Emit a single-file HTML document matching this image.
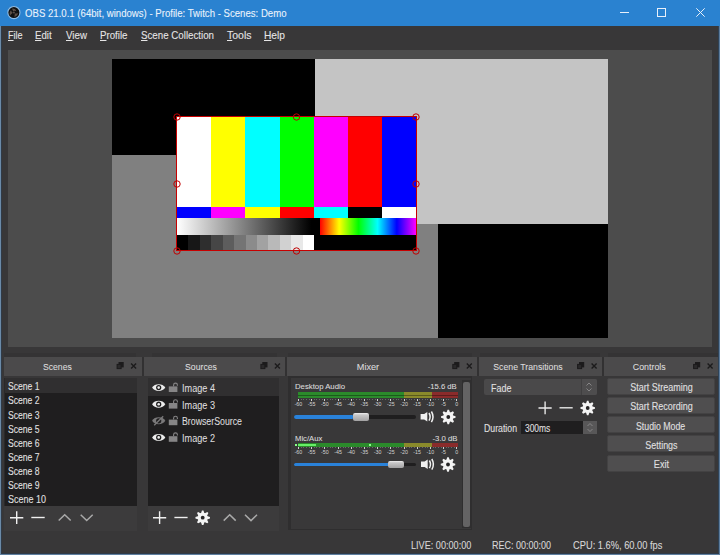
<!DOCTYPE html>
<html><head><meta charset="utf-8">
<style>
*{box-sizing:border-box;margin:0;padding:0}
html,body{width:720px;height:555px;overflow:hidden;background:#383738;font-family:"Liberation Sans",sans-serif;color:#e1e0e1}
.a{position:absolute}
.t{position:absolute;white-space:nowrap;line-height:1;-webkit-text-stroke:0.08px currentColor}
svg{position:absolute;overflow:visible}
.dtitle{position:absolute;top:357px;height:18.5px;background:#4b4a4b}
.list{position:absolute;background:#1f1e1f}
.btn{position:absolute;left:607px;width:108px;height:17.2px;background:#4f4e4f;border:1px solid #434243;border-radius:2px}
.lbl{position:absolute;font-size:5.3px;color:#d4d4d4;line-height:1;white-space:nowrap;transform:translateX(-50%)}
</style></head><body>
<svg style="left:0;top:0" width="0" height="0"><defs>
 <g id="gear"><path d="M-1.76 -4.25 L-0.76 -7.26 L0.76 -7.26 L1.76 -4.25 L4.59 -5.67 L5.67 -4.59 L4.25 -1.76 L7.26 -0.76 L7.26 0.76 L4.25 1.76 L5.67 4.59 L4.59 5.67 L1.76 4.25 L0.76 7.26 L-0.76 7.26 L-1.76 4.25 L-4.59 5.67 L-5.67 4.59 L-4.25 1.76 L-7.26 0.76 L-7.26 -0.76 L-4.25 -1.76 L-5.67 -4.59 L-4.59 -5.67Z" fill="#f4f4f4"/><circle r="4.9" fill="#f4f4f4"/><circle r="1.9" fill="#262526"/></g>
 <g id="spk"><path d="M0 -2.8H3.6L6.7 -4.9V4.8L3.6 2.7H0Z" fill="#f0f0f0"/><path d="M8.4 -3.8Q10.6 0 8.4 3.8M10.8 -5.3Q14 0 10.8 5.3" fill="none" stroke="#f0f0f0" stroke-width="1.5"/></g>
 <g id="fc"><rect x="2" y="0" width="5.2" height="5.4" fill="#1c1b1c"/><rect x="0.6" y="2.4" width="4" height="4.2" fill="#2a292a" stroke="#1c1b1c" stroke-width="1"/><path d="M14.6 1.6L19.6 6.6M19.6 1.6L14.6 6.6" stroke="#1c1b1c" stroke-width="1.4"/></g>
 <g id="eye"><path d="M-6.6 0C-4.2 -4.6 4.2 -4.6 6.6 0C4.2 4.6 -4.2 4.6 -6.6 0Z" fill="#ececec"/><circle r="2.6" fill="#1f1e1f"/><circle r="1.3" fill="#ececec"/></g>
 <g id="lock"><rect x="-4.2" y="-1.6" width="8.6" height="5.6" fill="#868586"/><path d="M0.6 -1.6V-3A1.9 1.9 0 0 1 4.4 -3V-2.2" fill="none" stroke="#868586" stroke-width="1.1"/></g>
 <g id="spin"><path d="M1.5 4.5L4 2L6.5 4.5M1.5 7.5L4 10L6.5 7.5" fill="none" stroke="#8c8b8c" stroke-width="0.9"/></g>
</defs></svg>

<!-- title bar -->
<div class="a" style="left:0;top:0;width:720px;height:26px;background:#2a82d0"></div>
<svg style="left:7px;top:6px" width="14" height="14" viewBox="0 0 14 14">
 <circle cx="6.9" cy="6.55" r="6.1" fill="#111" stroke="#8fbde6" stroke-width="1.1"/>
 <path d="M5.2 2.6Q8.6 2.2 9.4 5.2Q7.6 4.2 6.2 5.2Q5.2 4 5.2 2.6Z" fill="#5c4f47"/>
 <path d="M11 7.2Q10.2 10.4 7.2 10.8Q8.2 9.2 7.6 7.6Q9.2 7.6 11 7.2Z" fill="#5c4f47"/>
 <path d="M3 9.6Q1.8 6.4 4 4.2Q4.4 6 5.8 6.8Q4.4 7.8 3 9.6Z" fill="#5c4f47"/>
 <circle cx="6.9" cy="6.6" r="1" fill="#5a504a"/>
</svg>
<div class="a" style="left:620px;top:12px;width:9px;height:1px;background:#e8f0fa"></div>
<div class="a" style="left:657px;top:8px;width:9px;height:9px;border:1px solid #e8f0fa"></div>
<svg style="left:695.5px;top:8px" width="9" height="9" viewBox="0 0 9 9"><path d="M0.3 0.3L8.7 8.7M8.7 0.3L0.3 8.7" stroke="#e8f0fa" stroke-width="1"/></svg>

<!-- preview -->
<div class="a" style="left:8px;top:50px;width:704px;height:296.8px;background:#4c4c4c"></div>
<div class="a" style="left:112px;top:58.5px;width:496px;height:279.5px;background:#808080"></div>
<div class="a" style="left:112px;top:58.5px;width:203px;height:96.5px;background:#000"></div>
<div class="a" style="left:315px;top:58.5px;width:293px;height:165px;background:#c4c4c4"></div>
<div class="a" style="left:438px;top:223.5px;width:170px;height:114.5px;background:#000"></div>
<!-- color bars -->
<div class="a" style="left:177.2px;top:116.9px;width:239px;height:133.6px;background:#000;overflow:hidden">
 <div class="a" style="left:0;top:0;width:239px;height:90.5px;display:flex">
  <div style="flex:1;background:#fff"></div><div style="flex:1;background:#ff0"></div><div style="flex:1;background:#0ff"></div><div style="flex:1;background:#0f0"></div><div style="flex:1;background:#f0f"></div><div style="flex:1;background:#f00"></div><div style="flex:1;background:#00f"></div>
 </div>
 <div class="a" style="left:0;top:90.5px;width:239px;height:11px;display:flex">
  <div style="flex:1;background:#00f"></div><div style="flex:1;background:#f0f"></div><div style="flex:1;background:#ff0"></div><div style="flex:1;background:#f00"></div><div style="flex:1;background:#0ff"></div><div style="flex:1;background:#000"></div><div style="flex:1;background:#fff"></div>
 </div>
 <div class="a" style="left:0;top:101.5px;width:143px;height:17px;background:linear-gradient(90deg,#fff,#000 94%)"></div>
 <div class="a" style="left:143px;top:101.5px;width:96px;height:17px;background:linear-gradient(90deg,#f00,#ff0 20%,#0f0 40%,#0ff 60%,#00f 80%,#f0f)"></div>
 <div class="a" style="left:0;top:118.5px;width:137px;height:15.5px;background:linear-gradient(90deg,#000 0 8.33%,#171717 0 16.66%,#2e2e2e 0 25%,#464646 0 33.33%,#5d5d5d 0 41.66%,#747474 0 50%,#8b8b8b 0 58.33%,#a2a2a2 0 66.66%,#b9b9b9 0 75%,#d1d1d1 0 83.33%,#e8e8e8 0 91.66%,#fff 0)"></div>
</div>
<!-- selection box -->
<div class="a" style="left:176.4px;top:116px;width:240.4px;height:135.2px;border:1px solid #c80000"></div>
<svg style="left:170px;top:109.5px" width="254" height="149" viewBox="0 0 254 149">
 <g fill="none" stroke="#c00000" stroke-width="1">
  <circle cx="7" cy="7" r="3.2"/><circle cx="126.5" cy="7" r="3.2"/><circle cx="246" cy="7" r="3.2"/>
  <circle cx="7" cy="74" r="3.2"/><circle cx="246" cy="74" r="3.2"/>
  <circle cx="7" cy="141" r="3.2"/><circle cx="126.5" cy="141" r="3.2"/><circle cx="246" cy="141" r="3.2"/>
 </g>
</svg>

<!-- dock top dark band segments -->
<div class="a" style="left:4px;top:353px;width:132px;height:4px;background:#343334"></div>
<div class="a" style="left:152px;top:353px;width:125px;height:4px;background:#343334"></div>
<div class="a" style="left:288px;top:353px;width:184px;height:4px;background:#343334"></div>
<div class="a" style="left:480px;top:353px;width:120px;height:4px;background:#343334"></div>
<div class="a" style="left:608px;top:353px;width:110px;height:4px;background:#343334"></div>

<!-- dock titles -->
<div class="a" style="left:4px;top:357px;width:714px;height:18.5px;background:#323132"></div>
<div class="dtitle" style="left:4px;width:137.5px"></div>
<div class="dtitle" style="left:143.5px;width:141.8px"></div>
<div class="dtitle" style="left:287px;width:190.2px"></div>
<div class="dtitle" style="left:479.4px;width:122.6px"></div>
<div class="dtitle" style="left:604.4px;width:113.6px"></div>
<svg style="left:0;top:0" width="720" height="555">
 <use href="#fc" x="116.5" y="362"/>
 <use href="#fc" x="260.3" y="362"/>
 <use href="#fc" x="452.2" y="362"/>
 <use href="#fc" x="577" y="362"/>
 <use href="#fc" x="693" y="362"/>
</svg>

<!-- Scenes dock -->
<div class="list" style="left:4px;top:378px;width:133px;height:128px"></div>
<div class="a" style="left:4px;top:378px;width:133px;height:14.8px;background:#302f30"></div>
<div class="a" style="left:4px;top:506px;width:133px;height:24.5px;background:#3c3b3c"></div>
<div class="a" style="left:4px;top:378px;width:1px;height:128px;background:#2a292a"></div>
<svg style="left:4px;top:506px" width="133" height="24" viewBox="0 0 133 24">
 <path d="M6 11.7H19.3M12.7 5.2V18" stroke="#efefef" stroke-width="1.4"/>
 <path d="M27.3 11.5H40.7" stroke="#efefef" stroke-width="1.4"/>
 <path d="M54.7 14.5L60.7 8.7L66.7 14.5" fill="none" stroke="#a9a9a9" stroke-width="1.5"/>
 <path d="M76.7 8.7L82.7 14.5L88.7 8.7" fill="none" stroke="#a9a9a9" stroke-width="1.5"/>
</svg>

<!-- Sources dock -->
<div class="list" style="left:148px;top:378px;width:131px;height:128px"></div>
<div class="a" style="left:148px;top:378px;width:131px;height:17.5px;background:#302f30"></div>
<svg style="left:148px;top:378px" width="40" height="70" viewBox="0 0 40 70">
 <use href="#eye" x="10.7" y="9.6"/>
 <use href="#eye" x="10.7" y="26.2"/>
 <g transform="translate(10.7 42.8)"><path d="M-6.6 0C-4.2 -4.6 4.2 -4.6 6.6 0C4.2 4.6 -4.2 4.6 -6.6 0Z" fill="#7a797a"/><circle r="2.6" fill="#1f1e1f"/><path d="M-4.5 4.5L4.5 -4.5" stroke="#7a797a" stroke-width="1.3"/></g>
 <use href="#eye" x="10.7" y="59.4"/>
 <use href="#lock" x="25" y="10"/>
 <use href="#lock" x="25" y="26.6"/>
 <use href="#lock" x="25" y="43.2"/>
 <use href="#lock" x="25" y="59.8"/>
</svg>
<div class="a" style="left:148px;top:506px;width:131px;height:24.5px;background:#3c3b3c"></div>
<svg style="left:148px;top:506px" width="131" height="24" viewBox="0 0 131 24">
 <path d="M5 11.7H18.2M11.6 5.2V18" stroke="#efefef" stroke-width="1.4"/>
 <path d="M26.4 11.5H39.6" stroke="#efefef" stroke-width="1.4"/>
 <use href="#gear" x="54.7" y="11.7"/>
 <path d="M75.7 14.6L81.7 8.8L87.7 14.6" fill="none" stroke="#a9a9a9" stroke-width="1.5"/>
 <path d="M97 8.8L103 14.6L109 8.8" fill="none" stroke="#a9a9a9" stroke-width="1.5"/>
</svg>

<!-- Mixer dock -->
<div class="a" style="left:288px;top:375.5px;width:184px;height:154px;background:#2f2e2f"></div>
<div class="a" style="left:291px;top:378px;width:180px;height:151px;background:#393839"></div>
<div class="a" style="left:462px;top:380px;width:9px;height:148px;background:#2f2e2f"></div>
<div class="a" style="left:463px;top:381.6px;width:6.6px;height:145px;background:#646364;border-radius:2px"></div>
<div class="a" style="left:298px;top:392.3px;width:105.6px;height:5.5px;background:#2b8a2b"></div>
<div class="a" style="left:403.6px;top:392.3px;width:28.6px;height:5.5px;background:#8a8a2b"></div>
<div class="a" style="left:432.2px;top:392.3px;width:25.6px;height:5.5px;background:#8a2b2b"></div>
<div class="a" style="left:298px;top:395px;width:160px;height:0.6px;background:rgba(0,0,0,0.35)"></div>
<div class="a" style="left:298px;top:443.1px;width:105.6px;height:3.8px;background:#2b8a2b"></div>
<div class="a" style="left:403.6px;top:443.1px;width:28.6px;height:3.8px;background:#8a8a2b"></div>
<div class="a" style="left:432.2px;top:443.1px;width:25.6px;height:3.8px;background:#8a2b2b"></div>
<div class="a" style="left:298px;top:443.5px;width:17.5px;height:2px;background:#66ee66"></div>
<div class="a" style="left:294.8px;top:443.5px;width:2px;height:2px;background:#88ff88"></div>
<div class="a" style="left:368.8px;top:443.5px;width:2px;height:2px;background:#88ff88"></div>
<div class="a" style="left:297.9px;top:398.6px;width:1px;height:2px;background:#d0cfd0"></div>
<div class="lbl" style="left:298.4px;top:401.6px">-60</div>
<div class="a" style="left:300.5px;top:398.6px;width:1px;height:1px;background:#6a696a"></div>
<div class="a" style="left:303.2px;top:398.6px;width:1px;height:1px;background:#6a696a"></div>
<div class="a" style="left:305.8px;top:398.6px;width:1px;height:1px;background:#6a696a"></div>
<div class="a" style="left:308.5px;top:398.6px;width:1px;height:1px;background:#6a696a"></div>
<div class="a" style="left:311.1px;top:398.6px;width:1px;height:2px;background:#d0cfd0"></div>
<div class="lbl" style="left:311.6px;top:401.6px">-55</div>
<div class="a" style="left:313.7px;top:398.6px;width:1px;height:1px;background:#6a696a"></div>
<div class="a" style="left:316.4px;top:398.6px;width:1px;height:1px;background:#6a696a"></div>
<div class="a" style="left:319.0px;top:398.6px;width:1px;height:1px;background:#6a696a"></div>
<div class="a" style="left:321.7px;top:398.6px;width:1px;height:1px;background:#6a696a"></div>
<div class="a" style="left:324.3px;top:398.6px;width:1px;height:2px;background:#d0cfd0"></div>
<div class="lbl" style="left:324.8px;top:401.6px">-50</div>
<div class="a" style="left:326.9px;top:398.6px;width:1px;height:1px;background:#6a696a"></div>
<div class="a" style="left:329.6px;top:398.6px;width:1px;height:1px;background:#6a696a"></div>
<div class="a" style="left:332.2px;top:398.6px;width:1px;height:1px;background:#6a696a"></div>
<div class="a" style="left:334.9px;top:398.6px;width:1px;height:1px;background:#6a696a"></div>
<div class="a" style="left:337.5px;top:398.6px;width:1px;height:2px;background:#d0cfd0"></div>
<div class="lbl" style="left:338.0px;top:401.6px">-45</div>
<div class="a" style="left:340.1px;top:398.6px;width:1px;height:1px;background:#6a696a"></div>
<div class="a" style="left:342.8px;top:398.6px;width:1px;height:1px;background:#6a696a"></div>
<div class="a" style="left:345.4px;top:398.6px;width:1px;height:1px;background:#6a696a"></div>
<div class="a" style="left:348.1px;top:398.6px;width:1px;height:1px;background:#6a696a"></div>
<div class="a" style="left:350.7px;top:398.6px;width:1px;height:2px;background:#d0cfd0"></div>
<div class="lbl" style="left:351.2px;top:401.6px">-40</div>
<div class="a" style="left:353.3px;top:398.6px;width:1px;height:1px;background:#6a696a"></div>
<div class="a" style="left:356.0px;top:398.6px;width:1px;height:1px;background:#6a696a"></div>
<div class="a" style="left:358.6px;top:398.6px;width:1px;height:1px;background:#6a696a"></div>
<div class="a" style="left:361.3px;top:398.6px;width:1px;height:1px;background:#6a696a"></div>
<div class="a" style="left:363.9px;top:398.6px;width:1px;height:2px;background:#d0cfd0"></div>
<div class="lbl" style="left:364.4px;top:401.6px">-35</div>
<div class="a" style="left:366.5px;top:398.6px;width:1px;height:1px;background:#6a696a"></div>
<div class="a" style="left:369.2px;top:398.6px;width:1px;height:1px;background:#6a696a"></div>
<div class="a" style="left:371.8px;top:398.6px;width:1px;height:1px;background:#6a696a"></div>
<div class="a" style="left:374.5px;top:398.6px;width:1px;height:1px;background:#6a696a"></div>
<div class="a" style="left:377.1px;top:398.6px;width:1px;height:2px;background:#d0cfd0"></div>
<div class="lbl" style="left:377.6px;top:401.6px">-30</div>
<div class="a" style="left:379.7px;top:398.6px;width:1px;height:1px;background:#6a696a"></div>
<div class="a" style="left:382.4px;top:398.6px;width:1px;height:1px;background:#6a696a"></div>
<div class="a" style="left:385.0px;top:398.6px;width:1px;height:1px;background:#6a696a"></div>
<div class="a" style="left:387.7px;top:398.6px;width:1px;height:1px;background:#6a696a"></div>
<div class="a" style="left:390.3px;top:398.6px;width:1px;height:2px;background:#d0cfd0"></div>
<div class="lbl" style="left:390.8px;top:401.6px">-25</div>
<div class="a" style="left:392.9px;top:398.6px;width:1px;height:1px;background:#6a696a"></div>
<div class="a" style="left:395.6px;top:398.6px;width:1px;height:1px;background:#6a696a"></div>
<div class="a" style="left:398.2px;top:398.6px;width:1px;height:1px;background:#6a696a"></div>
<div class="a" style="left:400.9px;top:398.6px;width:1px;height:1px;background:#6a696a"></div>
<div class="a" style="left:403.5px;top:398.6px;width:1px;height:2px;background:#d0cfd0"></div>
<div class="lbl" style="left:404.0px;top:401.6px">-20</div>
<div class="a" style="left:406.1px;top:398.6px;width:1px;height:1px;background:#6a696a"></div>
<div class="a" style="left:408.8px;top:398.6px;width:1px;height:1px;background:#6a696a"></div>
<div class="a" style="left:411.4px;top:398.6px;width:1px;height:1px;background:#6a696a"></div>
<div class="a" style="left:414.1px;top:398.6px;width:1px;height:1px;background:#6a696a"></div>
<div class="a" style="left:416.7px;top:398.6px;width:1px;height:2px;background:#d0cfd0"></div>
<div class="lbl" style="left:417.2px;top:401.6px">-15</div>
<div class="a" style="left:419.3px;top:398.6px;width:1px;height:1px;background:#6a696a"></div>
<div class="a" style="left:422.0px;top:398.6px;width:1px;height:1px;background:#6a696a"></div>
<div class="a" style="left:424.6px;top:398.6px;width:1px;height:1px;background:#6a696a"></div>
<div class="a" style="left:427.3px;top:398.6px;width:1px;height:1px;background:#6a696a"></div>
<div class="a" style="left:429.9px;top:398.6px;width:1px;height:2px;background:#d0cfd0"></div>
<div class="lbl" style="left:430.4px;top:401.6px">-10</div>
<div class="a" style="left:432.5px;top:398.6px;width:1px;height:1px;background:#6a696a"></div>
<div class="a" style="left:435.2px;top:398.6px;width:1px;height:1px;background:#6a696a"></div>
<div class="a" style="left:437.8px;top:398.6px;width:1px;height:1px;background:#6a696a"></div>
<div class="a" style="left:440.5px;top:398.6px;width:1px;height:1px;background:#6a696a"></div>
<div class="a" style="left:443.1px;top:398.6px;width:1px;height:2px;background:#d0cfd0"></div>
<div class="lbl" style="left:443.6px;top:401.6px">-5</div>
<div class="a" style="left:445.7px;top:398.6px;width:1px;height:1px;background:#6a696a"></div>
<div class="a" style="left:448.4px;top:398.6px;width:1px;height:1px;background:#6a696a"></div>
<div class="a" style="left:451.0px;top:398.6px;width:1px;height:1px;background:#6a696a"></div>
<div class="a" style="left:453.7px;top:398.6px;width:1px;height:1px;background:#6a696a"></div>
<div class="a" style="left:456.3px;top:398.6px;width:1px;height:2px;background:#d0cfd0"></div>
<div class="lbl" style="left:456.8px;top:401.6px">0</div>
<div class="a" style="left:297.9px;top:446.8px;width:1px;height:2px;background:#d0cfd0"></div>
<div class="lbl" style="left:298.4px;top:449.6px">-60</div>
<div class="a" style="left:300.5px;top:446.8px;width:1px;height:1px;background:#6a696a"></div>
<div class="a" style="left:303.2px;top:446.8px;width:1px;height:1px;background:#6a696a"></div>
<div class="a" style="left:305.8px;top:446.8px;width:1px;height:1px;background:#6a696a"></div>
<div class="a" style="left:308.5px;top:446.8px;width:1px;height:1px;background:#6a696a"></div>
<div class="a" style="left:311.1px;top:446.8px;width:1px;height:2px;background:#d0cfd0"></div>
<div class="lbl" style="left:311.6px;top:449.6px">-55</div>
<div class="a" style="left:313.7px;top:446.8px;width:1px;height:1px;background:#6a696a"></div>
<div class="a" style="left:316.4px;top:446.8px;width:1px;height:1px;background:#6a696a"></div>
<div class="a" style="left:319.0px;top:446.8px;width:1px;height:1px;background:#6a696a"></div>
<div class="a" style="left:321.7px;top:446.8px;width:1px;height:1px;background:#6a696a"></div>
<div class="a" style="left:324.3px;top:446.8px;width:1px;height:2px;background:#d0cfd0"></div>
<div class="lbl" style="left:324.8px;top:449.6px">-50</div>
<div class="a" style="left:326.9px;top:446.8px;width:1px;height:1px;background:#6a696a"></div>
<div class="a" style="left:329.6px;top:446.8px;width:1px;height:1px;background:#6a696a"></div>
<div class="a" style="left:332.2px;top:446.8px;width:1px;height:1px;background:#6a696a"></div>
<div class="a" style="left:334.9px;top:446.8px;width:1px;height:1px;background:#6a696a"></div>
<div class="a" style="left:337.5px;top:446.8px;width:1px;height:2px;background:#d0cfd0"></div>
<div class="lbl" style="left:338.0px;top:449.6px">-45</div>
<div class="a" style="left:340.1px;top:446.8px;width:1px;height:1px;background:#6a696a"></div>
<div class="a" style="left:342.8px;top:446.8px;width:1px;height:1px;background:#6a696a"></div>
<div class="a" style="left:345.4px;top:446.8px;width:1px;height:1px;background:#6a696a"></div>
<div class="a" style="left:348.1px;top:446.8px;width:1px;height:1px;background:#6a696a"></div>
<div class="a" style="left:350.7px;top:446.8px;width:1px;height:2px;background:#d0cfd0"></div>
<div class="lbl" style="left:351.2px;top:449.6px">-40</div>
<div class="a" style="left:353.3px;top:446.8px;width:1px;height:1px;background:#6a696a"></div>
<div class="a" style="left:356.0px;top:446.8px;width:1px;height:1px;background:#6a696a"></div>
<div class="a" style="left:358.6px;top:446.8px;width:1px;height:1px;background:#6a696a"></div>
<div class="a" style="left:361.3px;top:446.8px;width:1px;height:1px;background:#6a696a"></div>
<div class="a" style="left:363.9px;top:446.8px;width:1px;height:2px;background:#d0cfd0"></div>
<div class="lbl" style="left:364.4px;top:449.6px">-35</div>
<div class="a" style="left:366.5px;top:446.8px;width:1px;height:1px;background:#6a696a"></div>
<div class="a" style="left:369.2px;top:446.8px;width:1px;height:1px;background:#6a696a"></div>
<div class="a" style="left:371.8px;top:446.8px;width:1px;height:1px;background:#6a696a"></div>
<div class="a" style="left:374.5px;top:446.8px;width:1px;height:1px;background:#6a696a"></div>
<div class="a" style="left:377.1px;top:446.8px;width:1px;height:2px;background:#d0cfd0"></div>
<div class="lbl" style="left:377.6px;top:449.6px">-30</div>
<div class="a" style="left:379.7px;top:446.8px;width:1px;height:1px;background:#6a696a"></div>
<div class="a" style="left:382.4px;top:446.8px;width:1px;height:1px;background:#6a696a"></div>
<div class="a" style="left:385.0px;top:446.8px;width:1px;height:1px;background:#6a696a"></div>
<div class="a" style="left:387.7px;top:446.8px;width:1px;height:1px;background:#6a696a"></div>
<div class="a" style="left:390.3px;top:446.8px;width:1px;height:2px;background:#d0cfd0"></div>
<div class="lbl" style="left:390.8px;top:449.6px">-25</div>
<div class="a" style="left:392.9px;top:446.8px;width:1px;height:1px;background:#6a696a"></div>
<div class="a" style="left:395.6px;top:446.8px;width:1px;height:1px;background:#6a696a"></div>
<div class="a" style="left:398.2px;top:446.8px;width:1px;height:1px;background:#6a696a"></div>
<div class="a" style="left:400.9px;top:446.8px;width:1px;height:1px;background:#6a696a"></div>
<div class="a" style="left:403.5px;top:446.8px;width:1px;height:2px;background:#d0cfd0"></div>
<div class="lbl" style="left:404.0px;top:449.6px">-20</div>
<div class="a" style="left:406.1px;top:446.8px;width:1px;height:1px;background:#6a696a"></div>
<div class="a" style="left:408.8px;top:446.8px;width:1px;height:1px;background:#6a696a"></div>
<div class="a" style="left:411.4px;top:446.8px;width:1px;height:1px;background:#6a696a"></div>
<div class="a" style="left:414.1px;top:446.8px;width:1px;height:1px;background:#6a696a"></div>
<div class="a" style="left:416.7px;top:446.8px;width:1px;height:2px;background:#d0cfd0"></div>
<div class="lbl" style="left:417.2px;top:449.6px">-15</div>
<div class="a" style="left:419.3px;top:446.8px;width:1px;height:1px;background:#6a696a"></div>
<div class="a" style="left:422.0px;top:446.8px;width:1px;height:1px;background:#6a696a"></div>
<div class="a" style="left:424.6px;top:446.8px;width:1px;height:1px;background:#6a696a"></div>
<div class="a" style="left:427.3px;top:446.8px;width:1px;height:1px;background:#6a696a"></div>
<div class="a" style="left:429.9px;top:446.8px;width:1px;height:2px;background:#d0cfd0"></div>
<div class="lbl" style="left:430.4px;top:449.6px">-10</div>
<div class="a" style="left:432.5px;top:446.8px;width:1px;height:1px;background:#6a696a"></div>
<div class="a" style="left:435.2px;top:446.8px;width:1px;height:1px;background:#6a696a"></div>
<div class="a" style="left:437.8px;top:446.8px;width:1px;height:1px;background:#6a696a"></div>
<div class="a" style="left:440.5px;top:446.8px;width:1px;height:1px;background:#6a696a"></div>
<div class="a" style="left:443.1px;top:446.8px;width:1px;height:2px;background:#d0cfd0"></div>
<div class="lbl" style="left:443.6px;top:449.6px">-5</div>
<div class="a" style="left:445.7px;top:446.8px;width:1px;height:1px;background:#6a696a"></div>
<div class="a" style="left:448.4px;top:446.8px;width:1px;height:1px;background:#6a696a"></div>
<div class="a" style="left:451.0px;top:446.8px;width:1px;height:1px;background:#6a696a"></div>
<div class="a" style="left:453.7px;top:446.8px;width:1px;height:1px;background:#6a696a"></div>
<div class="a" style="left:456.3px;top:446.8px;width:1px;height:2px;background:#d0cfd0"></div>
<div class="lbl" style="left:456.8px;top:449.6px">0</div>
<div class="a" style="left:294px;top:415px;width:122px;height:3.5px;background:#1f1e1f;border-radius:2px"></div>
<div class="a" style="left:294px;top:415px;width:60px;height:3.5px;background:#2a82da;border-radius:2px"></div>
<div class="a" style="left:352.6px;top:413px;width:16px;height:7.5px;border-radius:2px;background:linear-gradient(#f0eff0,#c8c7c8 25%,#a2a1a2)"></div>
<div class="a" style="left:294px;top:462.8px;width:122px;height:3.5px;background:#1f1e1f;border-radius:2px"></div>
<div class="a" style="left:294px;top:462.8px;width:96px;height:3.5px;background:#2a82da;border-radius:2px"></div>
<div class="a" style="left:388.3px;top:460.8px;width:16px;height:7.5px;border-radius:2px;background:linear-gradient(#f0eff0,#c8c7c8 25%,#a2a1a2)"></div>
<svg style="left:0;top:0" width="720" height="555">
 <use href="#spk" x="420.6" y="416.8"/>
 <use href="#gear" x="448.3" y="417"/>
 <use href="#spk" x="421" y="464.3"/>
 <use href="#gear" x="448" y="464.5"/>
</svg>

<!-- Scene transitions dock -->
<div class="a" style="left:484px;top:378.8px;width:112.5px;height:16.5px;background:#4a494a;border-radius:2px"></div>
<div class="a" style="left:581px;top:378.8px;width:15.5px;height:16.5px;background:#4e4d4e;border-left:1px solid #403f40;border-radius:0 2px 2px 0"></div>
<div class="a" style="left:521px;top:420.5px;width:62px;height:13.5px;background:#1f1e1f"></div>
<div class="a" style="left:583px;top:420.5px;width:14px;height:13.5px;background:#585758"></div>
<svg style="left:0;top:0" width="720" height="555">
 <use href="#spin" x="585" y="381"/>
 <use href="#spin" x="586" y="421.5"/>
 <path d="M538.5 408H551.7M545.1 401.5V414.3" stroke="#ececec" stroke-width="1.35"/>
 <path d="M559.5 407.8H572.7" stroke="#ececec" stroke-width="1.35"/>
 <use href="#gear" x="587.7" y="408"/>
</svg>

<!-- Controls dock -->
<div class="btn" style="top:377.5px"></div>
<div class="btn" style="top:396.9px"></div>
<div class="btn" style="top:416px"></div>
<div class="btn" style="top:435.2px"></div>
<div class="btn" style="top:454.5px"></div>

<!-- texts -->
<div class="t" style="left:25.30px;top:9.00px;font-size:10.4px;color:#eaf3fc;transform:scaleX(0.925);transform-origin:0 0">OBS 21.0.1 (64bit, windows) - Profile: Twitch - Scenes: Demo</div>
<div class="t" style="left:7.90px;top:31.00px;font-size:10.2px;color:#e6e5e6;transform:scaleX(0.889);transform-origin:0 0"><u>F</u>ile</div>
<div class="t" style="left:35.40px;top:31.00px;font-size:10.2px;color:#e6e5e6;transform:scaleX(0.945);transform-origin:0 0"><u>E</u>dit</div>
<div class="t" style="left:65.60px;top:31.00px;font-size:10.2px;color:#e6e5e6;transform:scaleX(0.954);transform-origin:0 0"><u>V</u>iew</div>
<div class="t" style="left:100.00px;top:31.00px;font-size:10.2px;color:#e6e5e6;transform:scaleX(0.952);transform-origin:0 0"><u>P</u>rofile</div>
<div class="t" style="left:141.00px;top:31.00px;font-size:10.2px;color:#e6e5e6;transform:scaleX(0.955);transform-origin:0 0"><u>S</u>cene Collection</div>
<div class="t" style="left:226.50px;top:31.00px;font-size:10.2px;color:#e6e5e6;transform:scaleX(1.030);transform-origin:0 0"><u>T</u>ools</div>
<div class="t" style="left:264.00px;top:31.00px;font-size:10.2px;color:#e6e5e6;transform:scaleX(1.002);transform-origin:0 0"><u>H</u>elp</div>
<div class="t" style="left:40.91px;top:362.00px;font-size:9.8px;color:#dcdbdc;transform:scaleX(0.884);transform-origin:50% 0">Scenes</div>
<div class="t" style="left:182.77px;top:362.00px;font-size:9.8px;color:#dcdbdc;transform:scaleX(0.887);transform-origin:50% 0">Sources</div>
<div class="t" style="left:356.22px;top:362.00px;font-size:9.8px;color:#dcdbdc;transform:scaleX(0.935);transform-origin:50% 0">Mixer</div>
<div class="t" style="left:488.76px;top:362.00px;font-size:9.8px;color:#dcdbdc;transform:scaleX(0.891);transform-origin:50% 0">Scene Transitions</div>
<div class="t" style="left:630.66px;top:362.00px;font-size:9.8px;color:#dcdbdc;transform:scaleX(0.899);transform-origin:50% 0">Controls</div>
<div class="t" style="left:7.80px;top:382.00px;font-size:10.2px;color:#e2e1e2;transform:scaleX(0.845);transform-origin:0 0">Scene 1</div>
<div class="t" style="left:7.80px;top:396.00px;font-size:10.2px;color:#e2e1e2;transform:scaleX(0.845);transform-origin:0 0">Scene 2</div>
<div class="t" style="left:7.80px;top:411.00px;font-size:10.2px;color:#e2e1e2;transform:scaleX(0.845);transform-origin:0 0">Scene 3</div>
<div class="t" style="left:7.80px;top:425.00px;font-size:10.2px;color:#e2e1e2;transform:scaleX(0.845);transform-origin:0 0">Scene 5</div>
<div class="t" style="left:7.80px;top:439.00px;font-size:10.2px;color:#e2e1e2;transform:scaleX(0.845);transform-origin:0 0">Scene 6</div>
<div class="t" style="left:7.80px;top:453.00px;font-size:10.2px;color:#e2e1e2;transform:scaleX(0.845);transform-origin:0 0">Scene 7</div>
<div class="t" style="left:7.80px;top:467.00px;font-size:10.2px;color:#e2e1e2;transform:scaleX(0.845);transform-origin:0 0">Scene 8</div>
<div class="t" style="left:7.80px;top:481.00px;font-size:10.2px;color:#e2e1e2;transform:scaleX(0.845);transform-origin:0 0">Scene 9</div>
<div class="t" style="left:7.80px;top:495.00px;font-size:10.2px;color:#e2e1e2;transform:scaleX(0.880);transform-origin:0 0">Scene 10</div>
<div class="t" style="left:181.50px;top:384.00px;font-size:10.2px;color:#dddcdd;transform:scaleX(0.896);transform-origin:0 0">Image 4</div>
<div class="t" style="left:181.50px;top:401.00px;font-size:10.2px;color:#dddcdd;transform:scaleX(0.896);transform-origin:0 0">Image 3</div>
<div class="t" style="left:181.50px;top:417.00px;font-size:10.2px;color:#dddcdd;transform:scaleX(0.861);transform-origin:0 0">BrowserSource</div>
<div class="t" style="left:181.50px;top:434.00px;font-size:10.2px;color:#dddcdd;transform:scaleX(0.896);transform-origin:0 0">Image 2</div>
<div class="t" style="left:295.00px;top:383.00px;font-size:7.6px;color:#dcdbdc;transform:scaleX(1.021);transform-origin:0 0">Desktop Audio</div>
<div class="t" style="left:428.48px;top:383.00px;font-size:7.6px;color:#dcdbdc;transform:scaleX(1.010);transform-origin:100% 0">-15.6 dB</div>
<div class="t" style="left:294.70px;top:435.00px;font-size:7.6px;color:#dcdbdc;transform:scaleX(1.011);transform-origin:0 0">Mic/Aux</div>
<div class="t" style="left:432.72px;top:435.00px;font-size:7.6px;color:#dcdbdc;transform:scaleX(1.021);transform-origin:100% 0">-3.0 dB</div>
<div class="t" style="left:491.40px;top:384.00px;font-size:10.2px;color:#e1e0e1;transform:scaleX(0.878);transform-origin:0 0">Fade</div>
<div class="t" style="left:483.60px;top:424.00px;font-size:10.2px;color:#e1e0e1;transform:scaleX(0.857);transform-origin:0 0">Duration</div>
<div class="t" style="left:524.50px;top:424.00px;font-size:10.2px;color:#e1e0e1;transform:scaleX(0.827);transform-origin:0 0">300ms</div>
<div class="t" style="left:625.61px;top:383.00px;font-size:10.2px;color:#e1e0e1;transform:scaleX(0.883);transform-origin:50% 0">Start Streaming</div>
<div class="t" style="left:625.61px;top:402.00px;font-size:10.2px;color:#e1e0e1;transform:scaleX(0.883);transform-origin:50% 0">Start Recording</div>
<div class="t" style="left:632.40px;top:422.00px;font-size:10.2px;color:#e1e0e1;transform:scaleX(0.860);transform-origin:50% 0">Studio Mode</div>
<div class="t" style="left:642.59px;top:441.00px;font-size:10.2px;color:#e1e0e1;transform:scaleX(0.877);transform-origin:50% 0">Settings</div>
<div class="t" style="left:652.51px;top:460.00px;font-size:10.2px;color:#e1e0e1;transform:scaleX(0.901);transform-origin:50% 0">Exit</div>
<div class="t" style="left:410.70px;top:541.00px;font-size:10.2px;color:#d8d7d8;transform:scaleX(0.895);transform-origin:0 0">LIVE: 00:00:00</div>
<div class="t" style="left:492.00px;top:541.00px;font-size:10.2px;color:#d8d7d8;transform:scaleX(0.883);transform-origin:0 0">REC: 00:00:00</div>
<div class="t" style="left:573.30px;top:541.00px;font-size:10.2px;color:#d8d7d8;transform:scaleX(0.913);transform-origin:0 0">CPU: 1.6%, 60.00 fps</div>

<!-- window borders -->
<div class="a" style="left:0;top:26px;width:1px;height:529px;background:#6a8aa8"></div>
<div class="a" style="left:1px;top:26px;width:1px;height:528px;background:#303a46"></div>
<div class="a" style="left:719px;top:26px;width:1px;height:529px;background:#5a7a9a"></div>
<div class="a" style="left:718px;top:26px;width:1px;height:528px;background:#2f4256"></div>
<div class="a" style="left:0;top:554px;width:720px;height:1px;background:#5f7f9f"></div>
<div class="a" style="left:1px;top:553px;width:718px;height:1px;background:#2e3a48"></div>
</body></html>
